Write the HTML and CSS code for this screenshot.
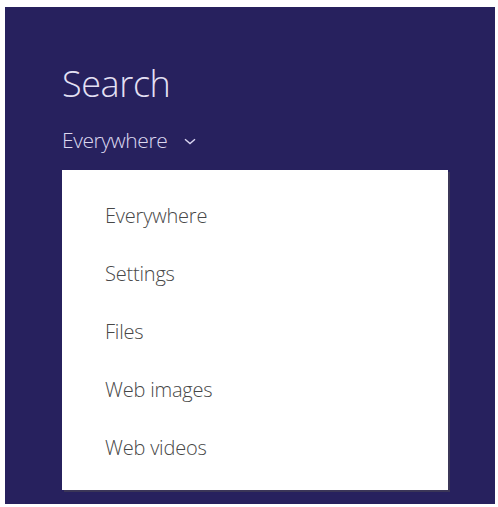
FILE: index.html
```html
<!DOCTYPE html>
<html lang="en">
<head>
<meta charset="utf-8">
<title>Search</title>
<link rel="stylesheet" href="styles.css">
</head>
<body>
<div class="panel">
  <h1 class="title">Search</h1>
  <div class="scope">
    <span class="scope-label">Everywhere</span>
    <svg class="chevron" width="12" height="7" viewBox="0 0 12 7" aria-hidden="true"><path d="M1 1.2 L6 5.6 L11 1.2" fill="none" stroke="#d9d5f0" stroke-width="1.4"/></svg>
  </div>
  <ul class="menu">
    <li class="menu-item">Everywhere</li>
    <li class="menu-item">Settings</li>
    <li class="menu-item">Files</li>
    <li class="menu-item">Web images</li>
    <li class="menu-item">Web videos</li>
  </ul>
</div>
</body>
</html>
```

FILE: styles.css
```css
html, body {
  margin: 0;
  padding: 0;
  background: #ffffff;
}
body {
  padding: 7px 3px 3px 5px;
  font-family: "Open Sans", "DejaVu Sans", sans-serif;
}
.panel {
  background: #27215e;
  height: 497px;
  box-sizing: border-box;
  padding: 55px 0 0 57px;
}
.title {
  margin: 0;
  font-size: 36px;
  font-weight: 300;
  line-height: 44px;
  color: #e4e0f4;
  letter-spacing: -0.4px;
}
.scope {
  display: flex;
  align-items: center;
  gap: 17px;
  margin-top: 20px;
  height: 28px;
}
.scope-label {
  font-size: 21px;
  font-weight: 300;
  color: #dcd8f0;
  letter-spacing: -0.4px;
}
.chevron {
  margin-top: 3px;
}
.menu {
  list-style: none;
  margin: 16px 0 0 0;
  padding: 16px 0 14px 43px;
  width: 386px;
  box-sizing: border-box;
  background: #ffffff;
  box-shadow: 2px 2px 0 #3b3658;
}
.menu-item {
  height: 58px;
  display: flex;
  align-items: center;
  font-size: 20px;
  font-weight: 300;
  color: #474747;
  letter-spacing: -0.2px;
}
```
